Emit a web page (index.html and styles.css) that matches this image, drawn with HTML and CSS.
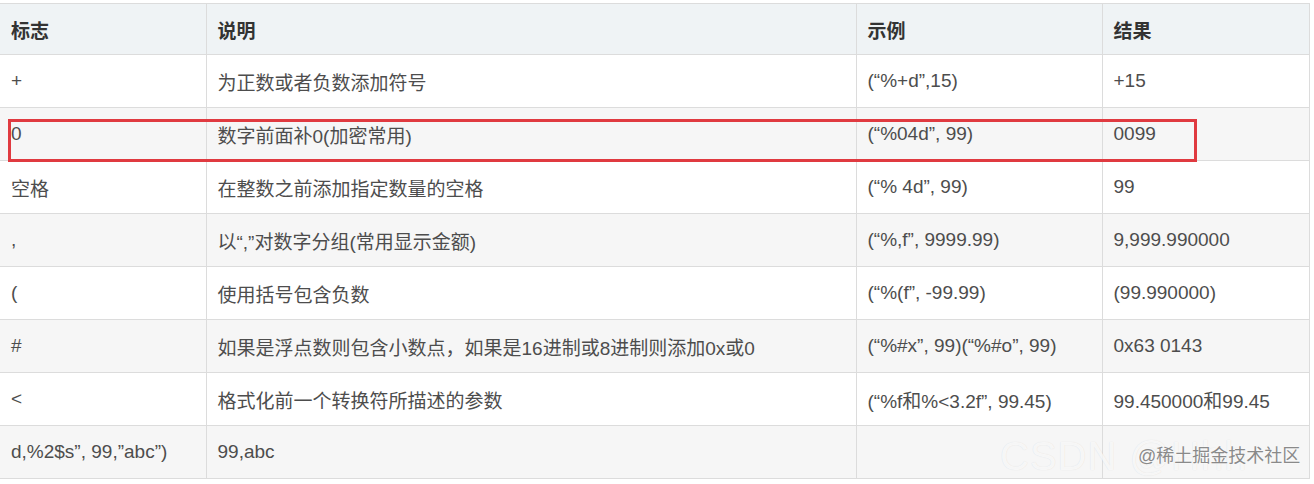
FILE: index.html
```html
<!DOCTYPE html>
<html lang="zh-CN">
<head>
    <meta charset="UTF-8">
    <meta name="viewport" content="width=device-width, initial-scale=1.0">
    <title>格式化标志</title>
    <link rel="stylesheet" href="styles.css">
</head>
<body>
    <div class="sheet">
        <table class="flags">
            <colgroup>
                <col class="c1">
                <col class="c2">
                <col class="c3">
                <col class="c4">
            </colgroup>
            <thead>
                <tr>
                    <th>标志</th>
                    <th>说明</th>
                    <th>示例</th>
                    <th>结果</th>
                </tr>
            </thead>
            <tbody>
                <tr>
                    <td>+</td>
                    <td>为正数或者负数添加符号</td>
                    <td>(“%+d”,15)</td>
                    <td>+15</td>
                </tr>
                <tr>
                    <td>0</td>
                    <td>数字前面补0(加密常用)</td>
                    <td>(“%04d”, 99)</td>
                    <td>0099</td>
                </tr>
                <tr>
                    <td>空格</td>
                    <td>在整数之前添加指定数量的空格</td>
                    <td>(“% 4d”, 99)</td>
                    <td>99</td>
                </tr>
                <tr>
                    <td>,</td>
                    <td>以“,”对数字分组(常用显示金额)</td>
                    <td>(“%,f”, 9999.99)</td>
                    <td>9,999.990000</td>
                </tr>
                <tr>
                    <td>(</td>
                    <td>使用括号包含负数</td>
                    <td>(“%(f”, -99.99)</td>
                    <td>(99.990000)</td>
                </tr>
                <tr>
                    <td>#</td>
                    <td>如果是浮点数则包含小数点，如果是16进制或8进制则添加0x或0</td>
                    <td>(“%#x”, 99)(“%#o”, 99)</td>
                    <td>0x63 0143</td>
                </tr>
                <tr>
                    <td>&lt;</td>
                    <td>格式化前一个转换符所描述的参数</td>
                    <td>(“%f和%&lt;3.2f”, 99.45)</td>
                    <td>99.450000和99.45</td>
                </tr>
                <tr>
                    <td>d,%2$s”, 99,”abc”)</td>
                    <td>99,abc</td>
                    <td></td>
                    <td></td>
                </tr>
            </tbody>
        </table>

        <!-- highlight drawn over the "0" row -->
        <div class="mark"></div>

        <div class="wm-big">CSDN @Hhh</div>
        <div class="wm-small">@稀土掘金技术社区</div>
    </div>
</body>
</html>
```

FILE: styles.css
```css
body {
    margin: 0;
    background: #fff;
    font-family: "Liberation Sans", "Noto Sans CJK SC", sans-serif;
    color: #4d4d4d;
}
.sheet {
    position: relative;
    width: 1314px;
    height: 484px;
    padding-top: 3px;
    box-sizing: border-box;
    overflow: hidden;
}
.flags {
    border-collapse: collapse;
    table-layout: fixed;
    width: 1309px;
    font-size: 19px;
}
.c1 { width: 206px; }
.c2 { width: 650px; }
.c3 { width: 246px; }
.c4 { width: 207px; }

.flags th,
.flags td {
    box-sizing: border-box;
    border: 1px solid #dcdcdc;
    text-align: left;
    vertical-align: middle;
    padding: 0 11px;
    white-space: nowrap;
    overflow: hidden;
}
.flags th:first-child,
.flags td:first-child {
    border-left: none;
}
.flags th {
    height: 51px;
    background: #eff3f5;
    color: #333;
    font-weight: bold;
}
.flags td {
    height: 53px;
}
.flags tbody tr:nth-child(even) td {
    background: #f6f6f6;
}

.mark {
    position: absolute;
    left: 8px;
    top: 119px;
    width: 1183px;
    height: 37px;
    border: 3px solid #e03a40;
}
.wm-big {
    position: absolute;
    left: 1000px;
    top: 434px;
    font-size: 40px;
    color: rgba(255, 255, 255, 0.8);
    text-shadow: 0 0 1px rgba(0, 0, 0, 0.12);
    letter-spacing: 1px;
}
.wm-small {
    position: absolute;
    left: 1138px;
    top: 441px;
    font-size: 18px;
    color: #8a8a8a;
    text-shadow: 0 0 2px #fff;
}
```
